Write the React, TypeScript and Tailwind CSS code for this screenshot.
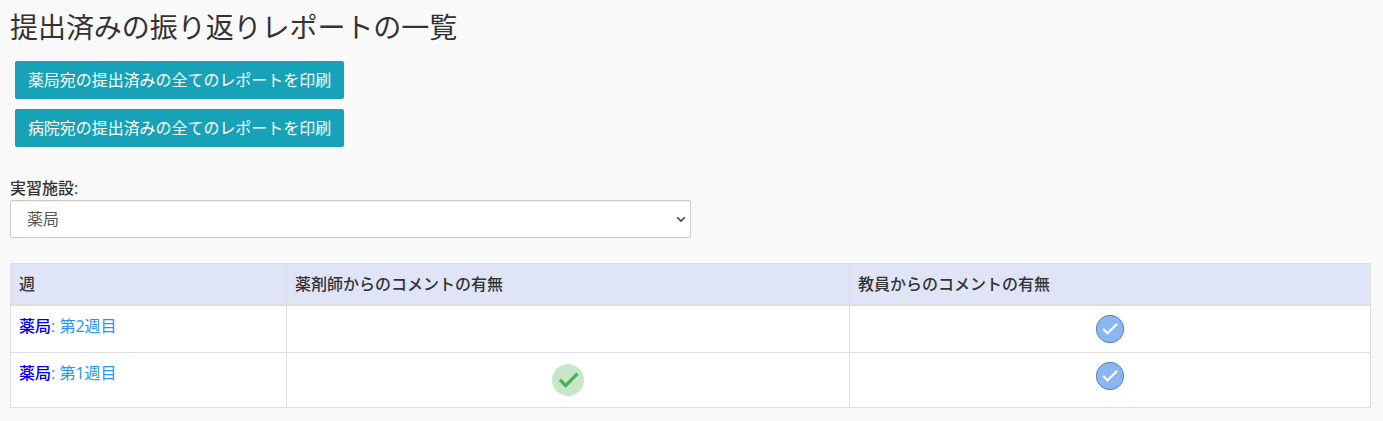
import React from "react";

const reports = [
  { id: 2, place: "薬局", title: "第2週目", pharmacist: false, teacher: true },
  { id: 1, place: "薬局", title: "第1週目", pharmacist: true, teacher: true },
];

function PharmacistCheck() {
  return (
    <svg className="mx-auto mt-[3px] block h-8 w-8" viewBox="0 0 48 48">
      <circle cx="24" cy="24" r="24" fill="#c8e6c9" />
      <path
        fill="#4caf50"
        d="M36.6 13.1L20.5 29.1L13.4 22.1L10.3 25.2L20.5 35.5L39.7 16.3Z"
        stroke="#4caf50"
        strokeWidth="0.6"
      />
    </svg>
  );
}

function TeacherCheck() {
  return (
    <svg className="mx-auto block h-[30px] w-[30px]" viewBox="0 0 30 30">
      <circle cx="15" cy="15" r="13.7" fill="#8bb7f0" stroke="#4e7ab5" strokeWidth="0.9" />
      <path d="M8.2 14.9L12.6 19.3L22.2 9.7" fill="none" stroke="#fff" strokeWidth="2.1" />
    </svg>
  );
}

function PrintButton({ label }: { label: string }) {
  return (
    <button className="h-[38px] w-[329px] rounded-[2px] bg-[#17a2b8] text-center tracking-[-0.04px] whitespace-nowrap text-white">
      {label}
    </button>
  );
}

export default function App() {
  return (
    <div className="min-h-screen bg-[#f9f9f9] px-2.5 pt-2.5 font-['Open_Sans','Noto_Sans_CJK_JP',sans-serif] text-base leading-6 text-[#333]">
      <h1 className="h-[34px] text-[28px] leading-[34px] tracking-[-0.05px]">
        提出済みの振り返りレポートの一覧
      </h1>
      <div className="mt-[17px] ml-[5px] flex flex-col items-start gap-2.5">
        <PrintButton label="薬局宛の提出済みの全てのレポートを印刷" />
        <PrintButton label="病院宛の提出済みの全てのレポートを印刷" />
      </div>

      <label htmlFor="place" className="mt-[29px] block h-6 font-medium">
        実習施設:
      </label>
      <div className="relative w-[681px]">
        <select
          id="place"
          className="block h-[38px] w-full appearance-none rounded-[2px] border border-[#ccc] bg-white pl-4 text-[#555] shadow-[inset_0_1px_1px_rgba(0,0,0,0.075)]"
        >
          <option>薬局</option>
          <option>病院</option>
        </select>
        <svg
          className="pointer-events-none absolute top-[16px] right-[5px] h-[7px] w-[10px]"
          viewBox="0 0 10 7"
        >
          <path d="M1.2 1.2L5 5L8.8 1.2" fill="none" stroke="#444" strokeWidth="1.6" />
        </svg>
      </div>

      <table className="mt-[25px] w-[1361px] table-fixed border-collapse border border-[#ddd] bg-white">
        <colgroup>
          <col className="w-[276px]" />
          <col className="w-[563px]" />
          <col />
        </colgroup>
        <thead>
          <tr className="h-[41px] bg-[#dfe4f7] text-left">
            <th className="border border-b-2 border-[#ddd] px-2 font-medium">週</th>
            <th className="border border-b-2 border-[#ddd] px-2 font-medium">
              薬剤師からのコメントの有無
            </th>
            <th className="border border-b-2 border-[#ddd] px-2 font-medium">
              教員からのコメントの有無
            </th>
          </tr>
        </thead>
        <tbody>
          {reports.map((r) => (
            <tr key={r.id} className="h-[47px] align-top last:h-[55px]">
              <td className="border border-[#ddd] p-2">
                <a href="#" className="text-[#2196f3]">
                  <span className="font-medium text-[#0000ee]">{r.place}</span>: {r.title}
                </a>
              </td>
              <td className="border border-[#ddd] p-2">{r.pharmacist && <PharmacistCheck />}</td>
              <td className="border border-[#ddd] p-2">{r.teacher && <TeacherCheck />}</td>
            </tr>
          ))}
        </tbody>
      </table>
    </div>
  );
}
